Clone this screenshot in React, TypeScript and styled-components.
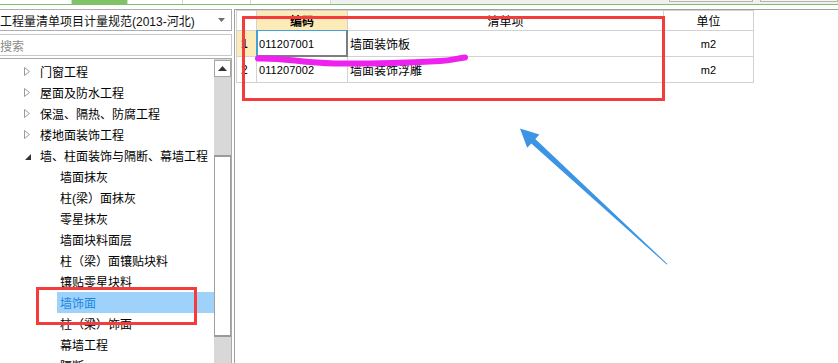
import React from "react";
import styled, { createGlobalStyle } from "styled-components";

const Global = createGlobalStyle`
  html, body { margin: 0; padding: 0; background: #fff; }
  body { font-family: "Liberation Sans", "Noto Sans CJK SC", sans-serif; }
`;

const Root = styled.div`
  position: relative;
  width: 838px;
  height: 363px;
  overflow: hidden;
  background: #fff;
  display: flex;
  flex-direction: column;
`;

const TabStrip = styled.div`
  height: 4px;
  display: flex;
  background: #f0f0f0;
`;

const Tab = styled.div<{ $w: number; $active?: boolean }>`
  width: ${(p) => p.$w}px;
  box-sizing: border-box;
  background: ${(p) => (p.$active ? "#80c267" : "#fff")};
  border-right: 1px solid #cfe0c6;
`;

const StubBox = styled.div<{ $w: number; $ml: number }>`
  width: ${(p) => p.$w}px;
  margin-left: ${(p) => p.$ml}px;
  height: 2px;
  box-sizing: border-box;
  border: 1px solid #b4b4b4;
  border-top: none;
  background: #f4f4f4;
`;

const GreenLine = styled.div`
  height: 1px;
  background: #7dc163;
`;

const Spacer = styled.div`
  height: 4px;
  background: #fff;
`;

const Body = styled.div`
  flex: 1;
  min-height: 0;
  display: flex;
  gap: 2px;
`;

const LeftPanel = styled.div`
  width: 232px;
  display: flex;
  flex-direction: column;
`;

const Combo = styled.div`
  height: 22px;
  box-sizing: border-box;
  border: 1px solid #abadb3;
  border-left: none;
  display: flex;
  align-items: center;
  justify-content: space-between;
  font-size: 12px;
  color: #111;
  padding-right: 6px;
  white-space: nowrap;
`;

const Search = styled.div`
  margin-top: 3px;
  height: 22px;
  box-sizing: border-box;
  border: 1px solid #c8c8c8;
  border-left: none;
  display: flex;
  align-items: center;
  font-size: 12px;
  color: #8a8a8a;
`;

const Tree = styled.div`
  margin-top: 2px;
  flex: 1;
  min-height: 0;
  border-top: 1px solid #a9a9a9;
  border-right: 1px solid #a9a9a9;
  display: flex;
  overflow: hidden;
`;

const TreeList = styled.div`
  width: 214px;
  padding-top: 2px;
  display: flex;
  flex-direction: column;
`;

const TreeRow = styled.div<{ $level: number; $selected?: boolean }>`
  height: 21px;
  flex: none;
  display: flex;
  align-items: center;
  box-sizing: border-box;
  font-size: 12px;
  white-space: nowrap;
  margin-left: ${(p) => (p.$level === 1 ? 24 : 57)}px;
  padding-left: ${(p) => (p.$level === 1 ? 0 : 3)}px;
  background: ${(p) => (p.$selected ? "#9ed2fb" : "transparent")};
  color: ${(p) => (p.$selected ? "#1787e0" : "#000")};
`;

const Twisty = styled.span`
  width: 16px;
  height: 21px;
  display: flex;
  align-items: center;
`;

const Scrollbar = styled.div`
  width: 17px;
  background: #d8d8d8;
  display: flex;
  flex-direction: column;
`;

const ScrollButton = styled.div`
  margin-top: 1px;
  height: 17px;
  box-sizing: border-box;
  border: 1px solid #a6a6a6;
  background: #fff;
  display: flex;
  align-items: center;
  justify-content: center;
`;

const Thumb = styled.div`
  margin-top: 78px;
  height: 182px;
  box-sizing: border-box;
  border: 1px solid #a0a0a0;
  border-top: 2px solid #9a9a9a;
  border-bottom: 2px solid #9a9a9a;
  background: #fff;
`;

const RightPanel = styled.div`
  flex: 1;
  border-top: 1px solid #a0a0a0;
  border-left: 1px solid #a0a0a0;
  padding-left: 1px;
`;

const Grid = styled.div`
  display: grid;
  grid-template-columns: 21px 91px 316px 90px;
  grid-template-rows: 21px 26px 26px;
  width: max-content;
`;

const Cell = styled.div<{
  $bg?: string;
  $align?: "left" | "center";
  $bold?: boolean;
  $first?: boolean;
  $top?: boolean;
}>`
  position: relative;
  box-sizing: border-box;
  border-right: 1px solid #d2d2d2;
  border-bottom: 1px solid #d2d2d2;
  border-left: ${(p) => (p.$first ? "1px solid #d2d2d2" : "none")};
  border-top: ${(p) => (p.$top ? "1px solid #d2d2d2" : "none")};
  background: ${(p) => p.$bg || "#fff"};
  display: flex;
  align-items: center;
  justify-content: ${(p) => (p.$align === "center" ? "center" : "flex-start")};
  padding-left: ${(p) => (p.$align === "center" ? 0 : p.$first ? 4 : 2)}px;
  font-size: 12px;
  font-weight: ${(p) => (p.$bold ? 700 : 400)};
  color: #000;
  white-space: nowrap;
`;

const Code = styled.span`
  font-size: 11px;
  letter-spacing: 0.1px;
`;

const Selection = styled.div`
  position: absolute;
  left: -1px;
  top: -1px;
  right: -1px;
  bottom: -1px;
  box-sizing: border-box;
  border-top: 1px solid #3ea3dc;
  border-left: 2px solid #3ea3dc;
  border-right: 2px solid #7d7d7d;
  border-bottom: 2px solid #7d7d7d;
`;

const Overlay = styled.svg`
  position: absolute;
  left: 0;
  top: 0;
  pointer-events: none;
`;

const treeItems: { label: string; level: number; state?: "closed" | "open"; selected?: boolean }[] = [
  { label: "门窗工程", level: 1, state: "closed" },
  { label: "屋面及防水工程", level: 1, state: "closed" },
  { label: "保温、隔热、防腐工程", level: 1, state: "closed" },
  { label: "楼地面装饰工程", level: 1, state: "closed" },
  { label: "墙、柱面装饰与隔断、幕墙工程", level: 1, state: "open" },
  { label: "墙面抹灰", level: 2 },
  { label: "柱(梁）面抹灰", level: 2 },
  { label: "零星抹灰", level: 2 },
  { label: "墙面块料面层", level: 2 },
  { label: "柱（梁）面镶贴块料", level: 2 },
  { label: "镶贴零星块料", level: 2 },
  { label: "墙饰面", level: 2, selected: true },
  { label: "柱（梁）饰面", level: 2 },
  { label: "幕墙工程", level: 2 },
  { label: "隔断", level: 2 },
];

const rows = [
  { n: "1", code: "011207001", name: "墙面装饰板", unit: "m2", active: true },
  { n: "2", code: "011207002", name: "墙面装饰浮雕", unit: "m2", active: false },
];

const ClosedIcon = () => (
  <svg width="6" height="9" viewBox="0 0 6 9">
    <path d="M0.5 0.5 L5.5 4.5 L0.5 8.5 Z" fill="none" stroke="#9a9a9a" strokeWidth="1" />
  </svg>
);

const OpenIcon = () => (
  <svg width="6" height="6" viewBox="0 0 6 6" style={{ marginTop: 2, marginLeft: 1 }}>
    <path d="M6 0 L6 6 L0 6 Z" fill="#333" />
  </svg>
);

export default function App() {
  return (
    <Root>
      <Global />
      <TabStrip>
        <Tab $w={72} />
        <Tab $w={56} $active />
        <Tab $w={55} />
        <Tab $w={68} />
        <Tab $w={80} />
        <StubBox $w={84} $ml={338} />
        <StubBox $w={78} $ml={7} />
      </TabStrip>
      <GreenLine />
      <Spacer />
      <Body>
        <LeftPanel>
          <Combo>
            <span>工程量清单项目计量规范(2013-河北)</span>
            <svg width="7" height="4" viewBox="0 0 7 4">
              <path d="M0 0 L7 0 L3.5 4 Z" fill="#6d6d6d" />
            </svg>
          </Combo>
          <Search>搜索</Search>
          <Tree>
            <TreeList>
              {treeItems.map((it) => (
                <TreeRow key={it.label} $level={it.level} $selected={it.selected}>
                  {it.level === 1 && (
                    <Twisty>{it.state === "open" ? <OpenIcon /> : <ClosedIcon />}</Twisty>
                  )}
                  {it.label}
                </TreeRow>
              ))}
            </TreeList>
            <Scrollbar>
              <ScrollButton>
                <svg width="9" height="5" viewBox="0 0 9 5">
                  <path d="M0 5 L4.5 0 L9 5 Z" fill="#333" />
                </svg>
              </ScrollButton>
              <Thumb />
            </Scrollbar>
          </Tree>
        </LeftPanel>
        <RightPanel>
          <Grid>
            <Cell $first $top />
            <Cell $top $bg="#fdebb7" $align="center" $bold>
              编码
            </Cell>
            <Cell $top $align="center">
              清单项
            </Cell>
            <Cell $top $align="center">
              单位
            </Cell>
            {rows.map((r) => (
              <React.Fragment key={r.n}>
                <Cell $first $bg={r.active ? "#fdebb7" : "#fff"} $bold={r.active}>
                  {r.n}
                </Cell>
                <Cell>
                  <Code>{r.code}</Code>
                  {r.active && <Selection />}
                </Cell>
                <Cell>{r.name}</Cell>
                <Cell $align="center">
                  <Code>{r.unit}</Code>
                </Cell>
              </React.Fragment>
            ))}
          </Grid>
        </RightPanel>
      </Body>
      <Overlay width="838" height="363" viewBox="0 0 838 363">
        <rect x="243.5" y="17.5" width="420" height="82" fill="none" stroke="#f43c3c" strokeWidth="3" />
        <rect x="37.5" y="288.5" width="158" height="35" fill="none" stroke="#f43c3c" strokeWidth="3" />
        <path
          d="M258 58.5 C285 57.5 300 63 335 63.5 C370 64 420 62 440 61 C452 60.5 458 58 465 57.5"
          fill="none"
          stroke="#ee22ee"
          strokeWidth="6"
          strokeLinecap="round"
        />
        <polygon
          points="520,128.5 539.4,134.6 535.3,139 667.5,264 666.8,264.6 531.3,143.4 527.2,147.8"
          fill="#3b95e4"
        />
      </Overlay>
    </Root>
  );
}
